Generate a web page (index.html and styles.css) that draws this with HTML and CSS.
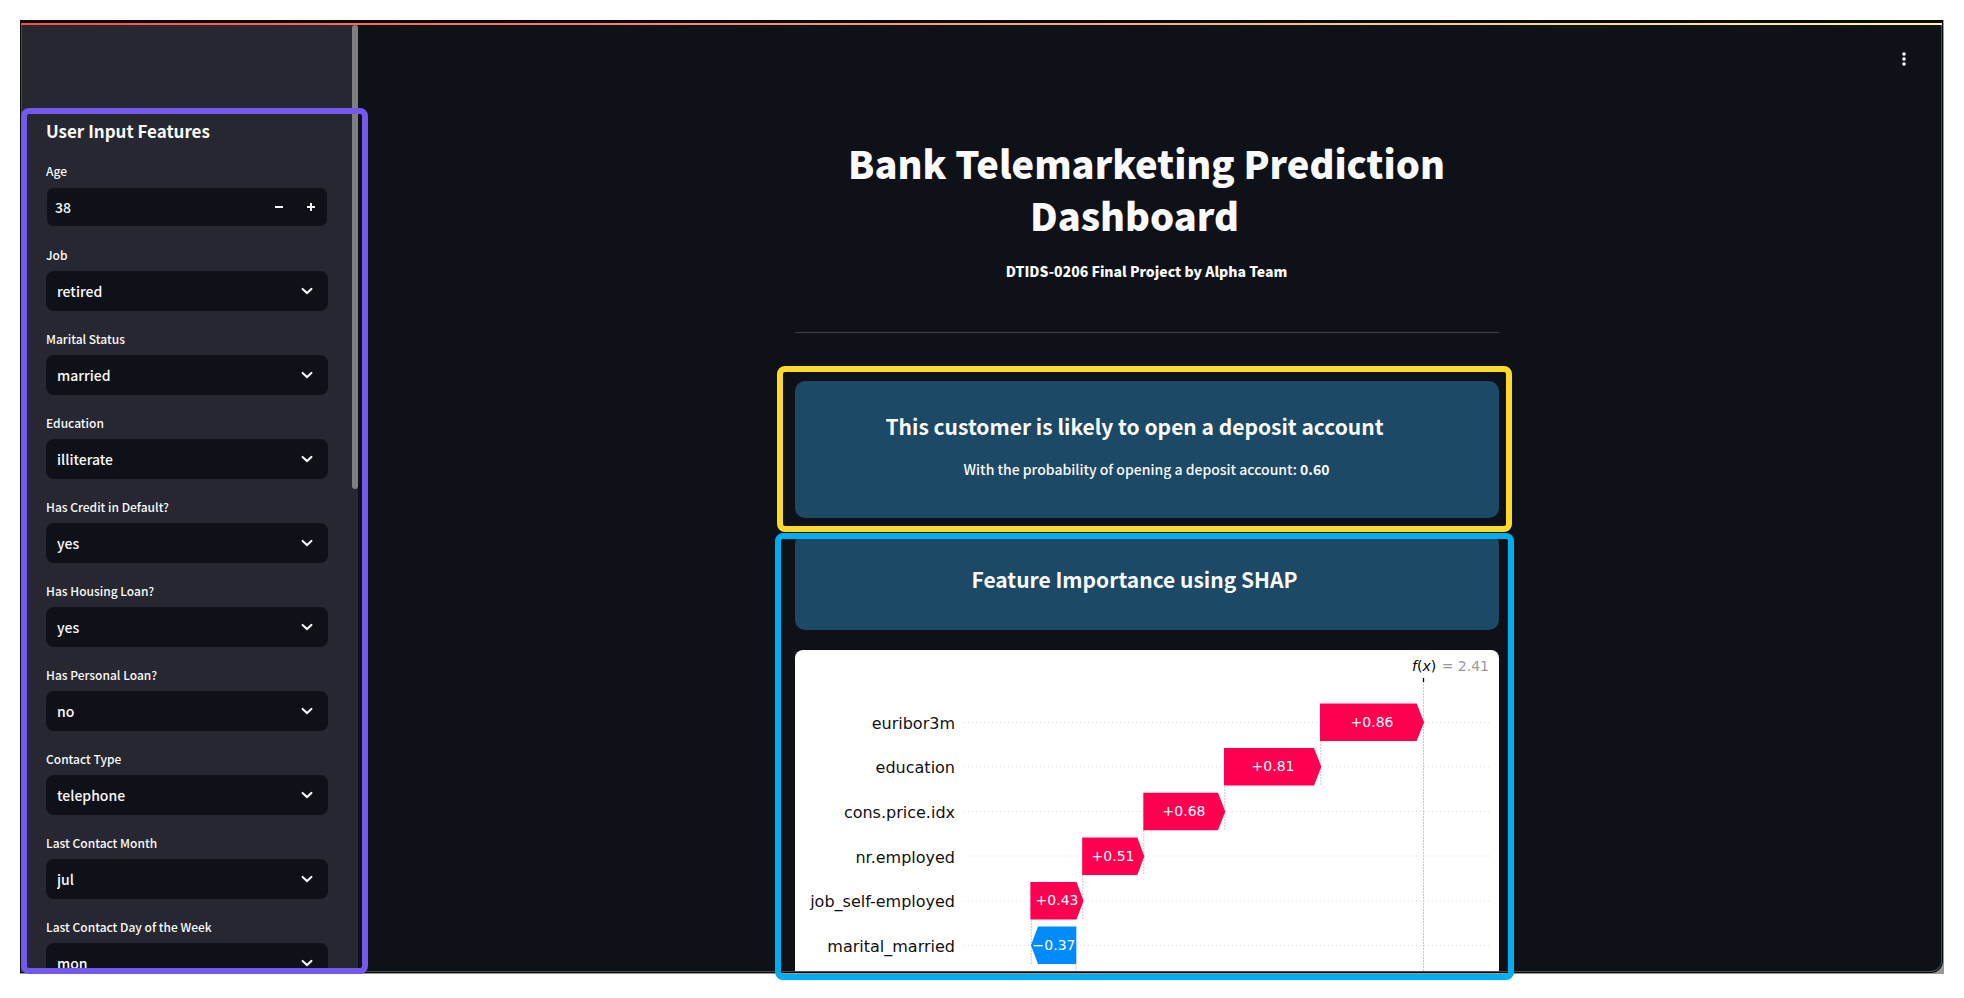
FILE: index.html
```html
<!DOCTYPE html>
<html lang="en">
<head>
<meta charset="utf-8">
<title>Bank Telemarketing Prediction Dashboard</title>
<link rel="stylesheet" href="styles.css">
</head>
<body>
<svg class="sprite" aria-hidden="true">
  <symbol id="chevron" viewBox="0 0 16 16"><path d="M3.6 5.9 8 10 12.4 5.9" fill="none" stroke="currentColor" stroke-width="2.1" stroke-linecap="round" stroke-linejoin="miter"/></symbol>
</svg>
<div class="stage">
  <div class="frame">
    <div class="window">
      <div class="rainbow"></div>
      <div class="app">
        <aside class="sidebar">
          <h2 class="sidebar-title">User Input Features</h2>
          <form class="fields">
            <div class="field">
              <label for="age">Age</label>
              <div class="number">
                <input id="age" type="text" inputmode="numeric" value="38">
                <button type="button" aria-label="Decrease age"><svg viewBox="0 0 10 10"><path d="M1 5H9" stroke="currentColor" stroke-width="2"/></svg></button>
                <button type="button" aria-label="Increase age"><svg viewBox="0 0 10 10"><path d="M1 5H9M5 1V9" stroke="currentColor" stroke-width="2"/></svg></button>
              </div>
            </div>
            <div class="field">
              <label for="job">Job</label>
              <div class="select"><select id="job"><option>retired</option></select><svg><use href="#chevron"/></svg></div>
            </div>
            <div class="field">
              <label for="marital">Marital Status</label>
              <div class="select"><select id="marital"><option>married</option></select><svg><use href="#chevron"/></svg></div>
            </div>
            <div class="field">
              <label for="education">Education</label>
              <div class="select"><select id="education"><option>illiterate</option></select><svg><use href="#chevron"/></svg></div>
            </div>
            <div class="field">
              <label for="default">Has Credit in Default?</label>
              <div class="select"><select id="default"><option>yes</option></select><svg><use href="#chevron"/></svg></div>
            </div>
            <div class="field">
              <label for="housing">Has Housing Loan?</label>
              <div class="select"><select id="housing"><option>yes</option></select><svg><use href="#chevron"/></svg></div>
            </div>
            <div class="field">
              <label for="loan">Has Personal Loan?</label>
              <div class="select"><select id="loan"><option>no</option></select><svg><use href="#chevron"/></svg></div>
            </div>
            <div class="field">
              <label for="contact">Contact Type</label>
              <div class="select"><select id="contact"><option>telephone</option></select><svg><use href="#chevron"/></svg></div>
            </div>
            <div class="field">
              <label for="month">Last Contact Month</label>
              <div class="select"><select id="month"><option>jul</option></select><svg><use href="#chevron"/></svg></div>
            </div>
            <div class="field">
              <label for="day">Last Contact Day of the Week</label>
              <div class="select"><select id="day"><option>mon</option></select><svg><use href="#chevron"/></svg></div>
            </div>
          </form>
          <div class="scrollbar"></div>
        </aside>
        <main class="main">
          <button class="menu" type="button" aria-label="Main menu">
            <svg viewBox="0 0 16 16" fill="currentColor"><circle cx="8" cy="3" r="1.8"/><circle cx="8" cy="8" r="1.8"/><circle cx="8" cy="13" r="1.8"/></svg>
          </button>
          <div class="column">
            <h1 class="title">Bank Telemarketing Prediction Dashboard<span class="anchor"></span></h1>
            <p class="subtitle">DTIDS-0206 Final Project by Alpha Team</p>
            <hr class="rule">
            <section class="card">
              <h2>This customer is likely to open a deposit account<span class="anchor"></span></h2>
              <p>With the probability of opening a deposit account: <b>0.60</b></p>
            </section>
            <section class="card">
              <h2>Feature Importance using SHAP<span class="anchor"></span></h2>
            </section>
            <svg class="chart" viewBox="0 0 704 366" role="img" aria-label="SHAP waterfall chart">
              <g class="grid-row">
                <path d="M169 72.5H694M169 117H694M169 161.5H694M169 206H694M169 251H694M169 295.5H694"/>
              </g>
              <g class="grid-col">
                <path d="M628.5 28V366M525.8 91V135M429.8 136V180M348.8 180V225M287.8 225V269M236.3 270V314M281 314V359"/>
              </g>
              <path class="tick" d="M628.5 28V32"/>
              <g class="up">
                <path d="M525 53.4H621.7L629 72.2L621.7 91H525Z"/>
                <path d="M429 98H519L526.3 116.7L519 135.5H429Z"/>
                <path d="M348.3 142.8H423L430.3 161.5L423 180.2H348.3Z"/>
                <path d="M287.2 187.5H342.3L349.3 206.2L342.3 225H287.2Z"/>
                <path d="M235.4 232H281.5L288.5 250.7L281.5 269.4H235.4Z"/>
              </g>
              <g class="down">
                <path d="M281.3 276.6H243L236 295.3L243 314H281.3Z"/>
                <path d="M314 321.3H286.5L279.5 340L286.5 358.8H314Z"/>
              </g>
              <g class="names">
                <text x="160" y="79">euribor3m</text>
                <text x="160" y="123">education</text>
                <text x="160" y="168">cons.price.idx</text>
                <text x="160" y="213">nr.employed</text>
                <text x="160" y="257">job_self-employed</text>
                <text x="160" y="302">marital_married</text>
              </g>
              <g class="values">
                <text x="577" y="77">+0.86</text>
                <text x="478" y="121">+0.81</text>
                <text x="389" y="166">+0.68</text>
                <text x="318" y="211">+0.51</text>
                <text x="262" y="255">+0.43</text>
                <text x="259" y="300">−0.37</text>
              </g>
              <text class="fx" x="617" y="21"><tspan class="it">f</tspan>(<tspan class="it">x</tspan>)</text>
              <text class="result" x="694" y="21">= 2.41</text>
            </svg>
          </div>
        </main>
      </div>
    </div>
  </div>
  <div class="mark mark-inputs"></div>
  <div class="mark mark-result"></div>
  <div class="mark mark-shap"></div>
</div>
</body>
</html>
```
FILE: styles.css
```css
* { box-sizing: border-box; }

body {
  margin: 0;
  height: 100vh;
  padding: 20px 20px 24px;
  overflow: hidden;
  background: #fff;
  color: #fafafa;
  font-family: "Noto Sans CJK SC", "Noto Sans", sans-serif;
  font-size: 14px;
  line-height: 24px;
}

h1, h2, p { margin: 0; }

.sprite { display: none; }

.stage { position: relative; height: 100%; }

.frame {
  height: 100%;
  padding: 0 1px 1px 0;
  background: #999;
}

.window {
  display: flex;
  flex-direction: column;
  height: 100%;
  padding: 3px 1px 1px;
  overflow: hidden;
  border-radius: 0 0 12px 0;
  background: #07090c;
}

.rainbow {
  flex: none;
  height: 2px;
  background: linear-gradient(90deg, #ff4b4b, #fffd80);
}

.app {
  display: flex;
  flex: 1;
  min-height: 0;
  overflow: hidden;
  border: solid #4a4b4f;
  border-width: 0 1px 1px;
  border-radius: 0 0 11px 0;
  background: #0e1117;
}

.sidebar {
  position: relative;
  flex: none;
  width: 336px;
  padding: 94px 30px 0 24px;
  overflow: hidden;
  background: #262730;
}

.sidebar-title { font-size: 17px; line-height: 24px; }

.fields { display: grid; gap: 16px; margin-top: 16px; }

.field { display: grid; gap: 4px; }

.field label { font-size: 12px; font-weight: 500; }

.number {
  display: flex;
  height: 40px;
  border: 1px solid #262730;
  border-radius: 8px;
  overflow: hidden;
  background: #0e1117;
}

.number input {
  flex: 1;
  min-width: 0;
  padding: 0 8px;
  border: 0;
  background: none;
  color: inherit;
  font: inherit;
  font-weight: 500;
}

.number button {
  display: grid;
  place-items: center;
  width: 32px;
  padding: 0;
  border: 0;
  background: none;
  color: inherit;
}

.number button svg { width: 10px; height: 10px; }

.select { display: grid; align-items: center; }

.select > * { grid-area: 1 / 1; }

.select select {
  width: 100%;
  height: 40px;
  padding: 0 40px 0 11px;
  border: 0;
  border-radius: 8px;
  appearance: none;
  background: #0e1117;
  color: inherit;
  font: inherit;
  font-weight: 500;
}

.select svg {
  justify-self: end;
  width: 16px;
  height: 16px;
  margin-right: 13px;
  pointer-events: none;
}

.scrollbar {
  position: absolute;
  top: 0;
  right: 0;
  width: 6px;
  height: 49%;
  border-radius: 3px;
  background: #7d7d82;
}

.main {
  position: relative;
  flex: 1;
  min-width: 0;
  padding: 112px 6px 0 0;
}

.menu {
  position: absolute;
  top: 22px;
  right: 25px;
  display: grid;
  place-items: center;
  width: 24px;
  height: 24px;
  padding: 0;
  border: 0;
  background: none;
  color: #fafafa;
}

.menu svg { width: 16px; height: 16px; }

.column {
  display: flex;
  flex-direction: column;
  gap: 16px;
  max-width: 704px;
  margin: 0 auto;
}

.title {
  margin-bottom: 2px;
  font-size: 38px;
  font-weight: 900;
  line-height: 52px;
  text-align: center;
}

.anchor { display: inline-block; width: 24px; }

.subtitle { font-weight: 900; text-align: center; }

.rule {
  width: 100%;
  height: 1px;
  margin: 33px 0 32px;
  border: 0;
  background: #3d4044;
}

.card {
  padding: 31px 16px 37px;
  border-radius: 10px;
  background: #1c4966;
  text-align: center;
}

.card h2 { font-size: 21px; line-height: 28px; }

.card p { margin-top: 17px; font-weight: 500; }

.chart {
  display: block;
  width: 100%;
  margin-top: 4px;
  border-radius: 8px;
  background: #fff;
  font-family: "DejaVu Sans", sans-serif;
  font-size: 14px;
}

.grid-row { stroke: #ddd; stroke-dasharray: 1 3; }
.grid-col { stroke: #bbb; stroke-dasharray: 2 1; stroke-width: .8; }
.tick { stroke: #000; stroke-width: 1.3; }
.up { fill: #ff0051; }
.down { fill: #008bfb; }
.names { fill: #111; font-size: 16px; text-anchor: end; }
.values { fill: #fff; text-anchor: middle; }
.fx { fill: #000; }
.it { font-style: italic; }
.result { fill: #999; text-anchor: end; }

.mark {
  position: absolute;
  border: 6px solid;
  border-radius: 8px;
  pointer-events: none;
}

.mark-inputs {
  top: 88px;
  bottom: 0;
  left: 1px;
  width: 347px;
  border-color: #7559ef;
}

.mark-result {
  top: 346px;
  left: calc(50% - 205px);
  width: 735px;
  height: 166px;
  border-color: #ffd92b;
}

.mark-shap {
  top: 513px;
  bottom: -6px;
  left: calc(50% - 207px);
  width: 739px;
  border-color: #00aeef;
}
```
